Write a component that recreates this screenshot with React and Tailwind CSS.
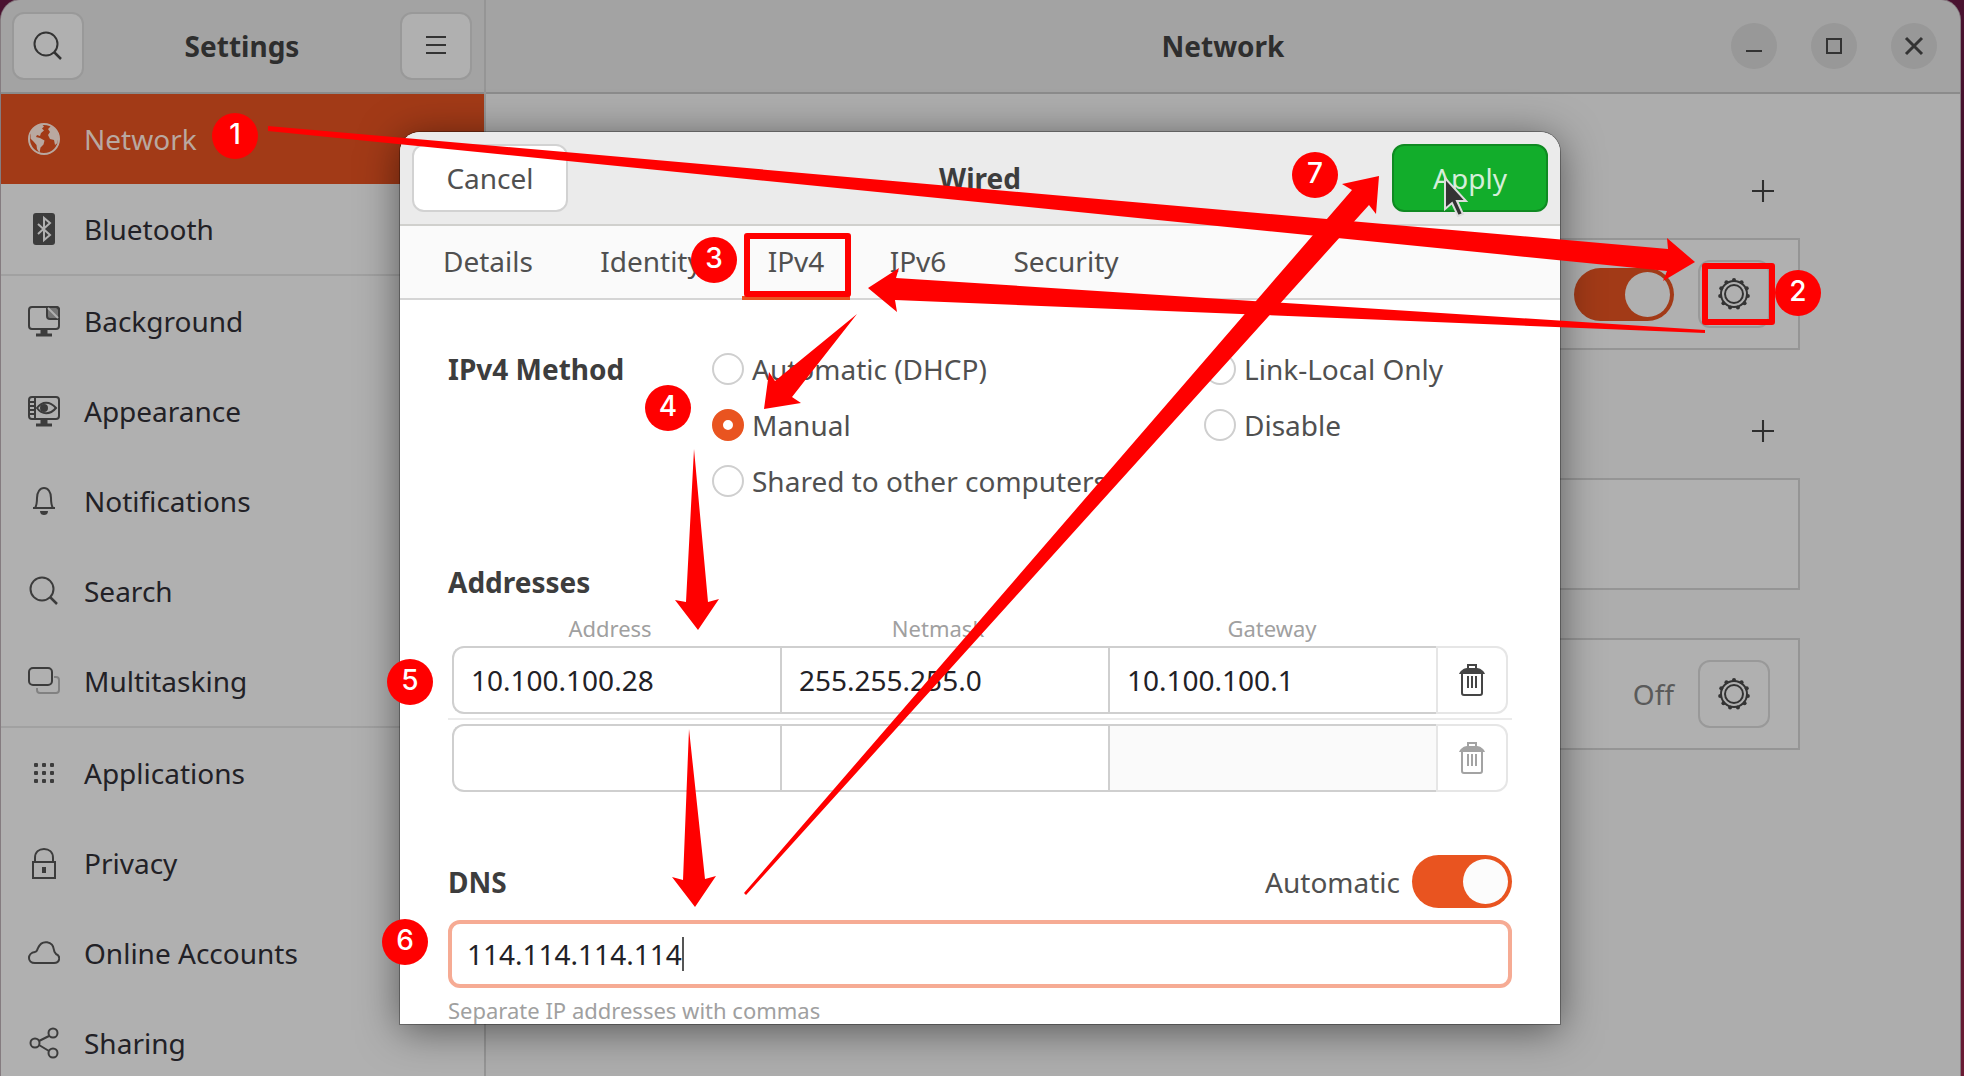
import { useState } from 'react';

const Svg = ({ children, className = 'size-8' }) => (
  <svg viewBox="0 0 32 32" className={className} fill="none" stroke="currentColor" strokeWidth="2" aria-hidden="true">
    {children}
  </svg>
);

const GlobeIcon = () => (
  <Svg>
    <circle cx="16" cy="16" r="15" />
    <g fill="currentColor" stroke="none">
      <path d="M3 9C6 4 10 2 14 1.5l2 2-2 2 2 2-3 2.500-1 3-3-1-1 2 4 1 4.500 2.500-1 4-3 3-1 5.500-2.500-4-.5-4-3-3.500-3-3z" />
      <path d="M20 6l3-3c4 2 6.500 6 7.500 10l-1 7-2.500 2-1-5-4-1-2-4 2-3-1-1.500z" />
    </g>
  </Svg>
);

const BluetoothIcon = () => (
  <Svg>
    <rect x="5" y="0" width="22" height="32" rx="3" fill="currentColor" stroke="none" />
    <path d="M10 11l12 11-6 5V5l6 5-12 11" stroke="#b0b0b0" />
  </Svg>
);

const BackgroundIcon = () => (
  <Svg>
    <rect x="1" y="2" width="30" height="22" rx="3" />
    <path d="M19 2v9c0 2 1 3 3 3h9V5c0-2-1-3-3-3z" fill="currentColor" fillOpacity="0.5" />
    <path d="M20 3l10 10" stroke="#b0b0b0" />
    <path d="M16 25v5M8 30h16" strokeWidth="3" />
    <path d="M16 25v4" strokeWidth="7" />
  </Svg>
);

const AppearanceIcon = () => (
  <Svg>
    <rect x="1" y="2" width="30" height="22" rx="3" />
    <path d="M7 2v22M1 7h6M1 11h6M1 15h6M1 19h6" />
    <path d="M9 13c5-7 13-7 19 0-6 7-14 7-19 0z" />
    <circle cx="16" cy="13" r="3" fill="currentColor" />
    <path d="M8 30h16" strokeWidth="3" />
    <path d="M16 25v4" strokeWidth="7" />
  </Svg>
);

const BellIcon = () => (
  <Svg>
    <path d="M5 23h22M7 23c2-3 2-6 2-10 0-6 3-10 7-10s7 4 7 10c0 4 0 7 2 10" />
    <path d="M12 26h8c0 3-2 4-4 4s-4-1-4-4z" fill="currentColor" stroke="none" />
  </Svg>
);

const SearchIcon = () => (
  <Svg>
    <circle cx="14" cy="14" r="11.500" />
    <path d="M22 22l7 7" strokeWidth="2.500" />
  </Svg>
);

const MultitaskingIcon = () => (
  <Svg>
    <rect x="1" y="3" width="23" height="17" rx="4" />
    <path d="M26 12h2c2 0 3 1 3 3v10c0 2-1 3-3 3H12c-2 0-3-1-3-3v-2" opacity="0.4" />
  </Svg>
);

const ApplicationsIcon = () => (
  <Svg>
    {[6, 14, 22].map(y => [6, 14, 22].map(x => (
      <rect key={`${x}-${y}`} x={x} y={y} width="4" height="4" rx="1" fill="currentColor" stroke="none" />
    )))}
  </Svg>
);

const LockIcon = () => (
  <Svg>
    <rect x="5" y="15" width="22" height="16" />
    <path d="M7 15v-4c0-6 4-9 9-9s9 3 9 9v4" />
    <path d="M14 20h4v6h-4z" fill="currentColor" stroke="none" />
  </Svg>
);

const CloudIcon = () => (
  <Svg>
    <path d="M7 26c-8 0-8-10 0-11 2 0 2-2 3-4 4-9 15-7 16 2 0 2 1 3 2 4 5 2 4 9-2 9z" />
  </Svg>
);

const ShareIcon = () => (
  <Svg>
    <circle cx="7" cy="16" r="4.500" />
    <circle cx="25" cy="6" r="4.500" />
    <circle cx="25" cy="26" r="4.500" />
    <path d="M11 14l10-5M11 18l10 6" />
  </Svg>
);

const GearIcon = () => (
  <Svg>
    <circle cx="16" cy="16" r="13" />
    <circle cx="16" cy="16" r="9" />
    {Array.from({ length: 11 }, (_, i) => {
      const a = (i / 11) * Math.PI * 2;
      return <circle key={i} cx={16 + 14 * Math.sin(a)} cy={16 - 14 * Math.cos(a)} r="2" fill="currentColor" stroke="none" />;
    })}
  </Svg>
);

const TrashIcon = () => (
  <Svg>
    <path d="M12 5V1h8v4" />
    <path d="M3 10c1-3 5-6 8-6h10c3 0 7 3 8 6z" fill="currentColor" stroke="none" />
    <path d="M6 10v19c0 1 1 2 2 2h16c1 0 2-1 2-2V10" />
    <path d="M12 12v12M16 12v12M20 12v12" />
  </Svg>
);

const PlusIcon = () => (
  <Svg className="size-[22px]">
    <path d="M16 0v32M0 16h32" strokeWidth="3" />
  </Svg>
);

const menuGroups = [
  [
    { name: 'Network', Icon: GlobeIcon, active: true },
    { name: 'Bluetooth', Icon: BluetoothIcon },
  ],
  [
    { name: 'Background', Icon: BackgroundIcon },
    { name: 'Appearance', Icon: AppearanceIcon },
    { name: 'Notifications', Icon: BellIcon },
    { name: 'Search', Icon: SearchIcon },
    { name: 'Multitasking', Icon: MultitaskingIcon },
  ],
  [
    { name: 'Applications', Icon: ApplicationsIcon },
    { name: 'Privacy', Icon: LockIcon },
    { name: 'Online Accounts', Icon: CloudIcon },
    { name: 'Sharing', Icon: ShareIcon },
  ],
];

const tabs = [
  { name: 'Details', width: 'w-[144px]' },
  { name: 'Identity', width: 'w-[154px]' },
  { name: 'IPv4', width: 'w-[108px]' },
  { name: 'IPv6', width: 'w-[108px]' },
  { name: 'Security', width: 'w-[160px]' },
];

const methodColumns = [
  ['Automatic (DHCP)', 'Manual', 'Shared to other computers'],
  ['Link-Local Only', 'Disable'],
];

// Позиции подсказок — от левого верхнего угла диалога
const steps = [
  { n: 1, x: -165, y: 4 },
  { n: 2, x: 1398, y: 161 },
  { n: 3, x: 314, y: 128 },
  { n: 4, x: 268, y: 276 },
  { n: 5, x: 10, y: 550 },
  { n: 6, x: 5, y: 810 },
  { n: 7, x: 915, y: 43 },
];

const arrows = [
  '-132,-6 1268,117 1267,106 1295,130 1263,149 1267,139 -132,-1',
  '1305,198 496,146 499,136 468,156 497,180 495,168 1305,201',
  '457,182 375,249 369,240 364,277 401,271 392,265',
  '294,317 286,470 275,468 298,498 319,467 308,470',
  '289,597 283,748 272,745 295,775 316,744 305,747',
  '344,761 952,58 942,52 979,44 976,82 969,73 346,763',
];

const Toggle = ({ id, label, dim }) => (
  <input
    id={id}
    type="checkbox"
    role="switch"
    aria-label={label}
    defaultChecked
    className={`flex h-[53px] w-[100px] shrink-0 appearance-none items-center rounded-full p-1 before:size-[45px] before:rounded-full before:content-[''] checked:justify-end ${
      dim ? 'bg-[#a23a17] before:bg-[#b0b0b0]' : 'bg-[#e95420] before:bg-[#fcfcfc]'
    }`}
  />
);

const Sidebar = () => (
  <aside className="flex w-[485px] shrink-0 flex-col border-r-2 border-[#959595] bg-[#b0b0b0]">
    <header className="flex h-[94px] shrink-0 items-center justify-between border-b-2 border-[#8b8b8b] bg-[#a3a3a3] pr-3 pl-[11px]">
      <button aria-label="Search settings" className="flex h-[68px] w-[72px] items-center justify-center rounded-xl border-2 border-[#999] bg-[#b0b0b0] text-[#333]">
        <SearchIcon />
      </button>
      <h1 className="font-bold">Settings</h1>
      <button aria-label="Menu" className="flex h-[68px] w-[72px] items-center justify-center rounded-xl border-2 border-[#999] bg-[#b0b0b0] text-[#333]">
        <Svg><path d="M6 7h20M6 15h20M6 23h20" /></Svg>
      </button>
    </header>
    <nav className="flex min-h-0 flex-1 flex-col divide-y-2 divide-[#a1a1a1] overflow-hidden">
      {menuGroups.map((group, i) => (
        <div key={i} className="shrink-0">
          {group.map(({ name, Icon, active }) => (
            <a
              key={name}
              href="#"
              className={`flex h-[90px] items-center gap-6 pl-[27px] ${active ? 'bg-[#a23a17] text-[#b9a8a0]' : 'text-[#222126]'}`}
            >
              <span className={active ? '' : 'text-[#3c3c3c]'}><Icon /></span>
              {name}
            </a>
          ))}
        </div>
      ))}
    </nav>
  </aside>
);

const NetworkPanel = () => (
  <main className="flex min-w-0 flex-1 flex-col bg-[#adadad]">
    <header className="grid h-[94px] shrink-0 grid-cols-[1fr_auto_1fr] items-center border-b-2 border-[#8b8b8b] bg-[#a3a3a3]">
      <h2 className="col-start-2 font-bold">Network</h2>
      <div className="flex justify-end gap-[34px] pr-[23px] text-[#333]">
        <button aria-label="Minimize" className="flex size-[46px] items-center justify-center rounded-full bg-[#989898]">
          <Svg><path d="M8 21h16" /></Svg>
        </button>
        <button aria-label="Maximize" className="flex size-[46px] items-center justify-center rounded-full bg-[#989898]">
          <Svg><path d="M9 9h14v14H9z" /></Svg>
        </button>
        <button aria-label="Close" className="flex size-[46px] items-center justify-center rounded-full bg-[#989898]">
          <Svg><path d="M8 8l16 16M24 8L8 24" strokeWidth="3" /></Svg>
        </button>
      </div>
    </header>
    <div className="mx-auto w-full max-w-[1154px] pt-[75px]">
      <div className="flex justify-end pr-[15px]">
        <button aria-label="Add wired connection" className="flex size-11 items-center justify-center"><PlusIcon /></button>
      </div>
      <div className="mt-[25px] flex h-28 items-center justify-end gap-6 border-2 border-[#959595] bg-[#b0b0b0] pr-7">
        <Toggle label="Wired" dim />
        <button aria-label="Wired settings" className="flex h-[68px] w-[72px] items-center justify-center rounded-xl border-2 border-[#999] text-[#333]"><GearIcon /></button>
      </div>
      <div className="mt-[59px] flex justify-end pr-[15px]">
        <button aria-label="Add VPN" className="flex size-11 items-center justify-center"><PlusIcon /></button>
      </div>
      <div className="mt-[25px] h-28 border-2 border-[#959595] bg-[#b0b0b0]" />
      <div className="mt-12 flex h-28 items-center justify-end gap-6 border-2 border-[#959595] bg-[#b0b0b0] pr-7">
        <span className="text-[#5a5a5a]">Off</span>
        <button aria-label="Proxy settings" className="flex h-[68px] w-[72px] items-center justify-center rounded-xl border-2 border-[#999] text-[#333]"><GearIcon /></button>
      </div>
    </div>
  </main>
);

const AddressRow = ({ address, netmask, gateway, disabled }) => (
  <div className="mx-1 grid h-[68px] grid-cols-[1fr_1fr_1fr_72px] text-[#222126]">
    <input aria-label="Address" defaultValue={address} className="min-w-0 rounded-l-xl border-2 border-r-0 border-[#cfcfcf] px-[17px]" />
    <input aria-label="Netmask" defaultValue={netmask} className="min-w-0 border-2 border-r-0 border-[#cfcfcf] px-[17px]" />
    <input
      aria-label="Gateway"
      defaultValue={gateway}
      disabled={disabled}
      className="min-w-0 border-y-2 border-l-2 border-[#cfcfcf] px-[17px] disabled:bg-[#fafafa]"
    />
    <button
      aria-label="Delete address"
      disabled={disabled}
      className="flex items-center justify-center rounded-r-xl border-2 border-[#e6e6e6] text-[#454545] disabled:text-[#a3a3a3]"
    >
      <TrashIcon />
    </button>
  </div>
);

const Annotations = () => (
  <div className="pointer-events-none absolute inset-0">
    <svg className="absolute inset-0 size-full overflow-visible" aria-hidden="true">
      <g fill="none" stroke="#f00" strokeWidth="6" strokeLinejoin="round">
        <rect x="347" y="104" width="101" height="58" />
        <rect x="1305" y="134" width="67" height="56" />
      </g>
      <g fill="#f00">
        {arrows.map(points => <polygon key={points} points={points} />)}
      </g>
      <path d="M1045 46v31l7-6 6 13 5-2-6-13h9z" fill="#333" stroke="#ddd" strokeWidth="2" />
    </svg>
    {steps.map(({ n, x, y }) => (
      <span
        key={n}
        className="absolute flex size-[46px] -translate-1/2 items-center justify-center rounded-full bg-[#f00] pb-1 font-[Inter,sans-serif] text-[28px] leading-8 font-medium text-white"
        style={{ left: x, top: y }}
      >
        {n}
      </span>
    ))}
  </div>
);

const WiredDialog = () => {
  const [activeTab, setActiveTab] = useState('IPv4');
  const [method, setMethod] = useState('Manual');
  const [dns, setDns] = useState('114.114.114.114');

  return (
    <div className="absolute top-33 right-px bottom-13 left-0 mx-auto w-full max-w-[1160px]">
      <div
        role="dialog"
        aria-label="Wired"
        className="flex h-full flex-col overflow-hidden rounded-t-[20px] bg-white text-[#505050] shadow-[0_0_0_1px_rgba(0,0,0,0.3),0_6px_40px_rgba(0,0,0,0.5)]"
      >
        <header className="grid h-[94px] shrink-0 grid-cols-[1fr_auto_1fr] items-center border-b-2 border-[#d0d0cd] bg-[#ebebeb] px-3">
          <button className="h-[68px] w-[156px] rounded-xl border-2 border-[#d2d2d2] bg-white">Cancel</button>
          <h2 className="font-bold text-[#3d3d3d]">Wired</h2>
          <button className="h-[68px] w-[156px] justify-self-end rounded-xl border-2 border-[#0f8a22] bg-[#12ad2b] text-[#d5eed9]">Apply</button>
        </header>

        <div role="tablist" className="flex h-[74px] shrink-0 gap-[14px] border-b-2 border-[#d5d5d5] bg-[#fafafa] pl-4">
          {tabs.map(tab => (
            <button
              key={tab.name}
              role="tab"
              aria-selected={activeTab === tab.name}
              onClick={() => setActiveTab(tab.name)}
              className={`-mb-0.5 border-b-4 ${tab.width} ${activeTab === tab.name ? 'border-[#e95420]' : 'border-transparent'}`}
            >
              {tab.name}
            </button>
          ))}
        </div>

        <div className="min-h-0 flex-1 overflow-hidden px-12 pt-[41px]">
          <fieldset className="grid grid-cols-[264px_492px_1fr]">
            <h3 className="leading-[56px] font-bold text-[#3d3d3d]">IPv4 Method</h3>
            {methodColumns.map((column, i) => (
              <div key={i}>
                {column.map(name => (
                  <label key={name} className="flex h-14 items-center gap-2 whitespace-nowrap">
                    <input
                      type="radio"
                      name="method"
                      checked={method === name}
                      onChange={() => setMethod(name)}
                      className="size-8 shrink-0 appearance-none rounded-full border-2 border-[#cfcfcf] bg-white checked:border-[11px] checked:border-[#e95420]"
                    />
                    {name}
                  </label>
                ))}
              </div>
            ))}
          </fieldset>

          <h3 className="mt-[55px] font-bold text-[#3d3d3d]">Addresses</h3>
          <div className="mx-1 mt-[14px] mb-1 grid grid-cols-[1fr_1fr_1fr_72px] text-center text-[22px] leading-7 text-[#a0a0a0]">
            <span className="pr-3">Address</span>
            <span className="pr-3">Netmask</span>
            <span>Gateway</span>
          </div>
          <AddressRow address="10.100.100.28" netmask="255.255.255.0" gateway="10.100.100.1" />
          <hr className="my-1 border-t-2 border-[#ebebeb]" />
          <AddressRow disabled />

          <div className="mt-[63px] flex items-center gap-3">
            <h3 className="flex-1 font-bold text-[#3d3d3d]">DNS</h3>
            <label htmlFor="dns-auto">Automatic</label>
            <Toggle id="dns-auto" />
          </div>
          <div className="mt-3 flex h-[68px] items-center rounded-xl border-4 border-[#f6ab94] pl-[15px] text-[#222126]">
            <input aria-label="DNS" value={dns} onChange={(e) => setDns(e.target.value)} className="field-sizing-content outline-none" />
            <span className="h-[34px] w-0.5 bg-[#555]" />
          </div>
          <p className="mt-2 text-[22px] leading-7 text-[#a0a0a0]">Separate IP addresses with commas</p>
        </div>
      </div>
      <Annotations />
    </div>
  );
};

export default function App() {
  return (
    <div className="h-screen overflow-hidden bg-linear-to-b from-[#4a1230] via-[#3a0d26] to-[#6b1c35] pr-1 pl-px font-['Noto_Sans','Open_Sans',sans-serif] text-[28px] leading-9 text-[#2e2e2e]">
      <div className="relative flex h-full">
        <div className="flex min-w-0 flex-1 overflow-hidden rounded-t-[20px] shadow-[0_0_0_1px_#857c80]">
          <Sidebar />
          <NetworkPanel />
        </div>
        <WiredDialog />
      </div>
    </div>
  );
}
